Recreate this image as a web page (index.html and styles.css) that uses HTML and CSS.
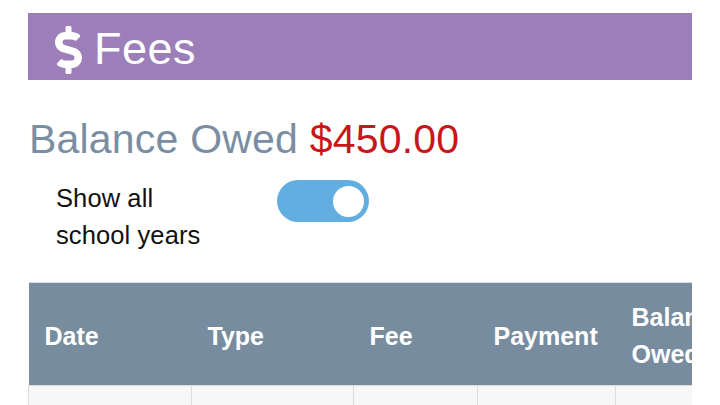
FILE: index.html
```html
<!DOCTYPE html>
<html>
<head>
<meta charset="utf-8">
<link rel="stylesheet" href="styles.css">
</head>
<body>
<div class="page">
  <header class="banner">
    <svg class="dollar" viewBox="0 0 288 512" aria-hidden="true"><path d="M209.2 233.4l-108-31.6C88.7 198.2 80 186.5 80 173.5c0-16.3 13.2-29.5 29.5-29.5h66.3c12.2 0 24.2 3.7 34.2 10.5 6.1 4.1 14.3 3.1 19.5-2l34.8-34c7.1-6.9 6.1-18.4-1.8-24.5C238 74.8 207.4 64.1 176 64V16c0-8.8-7.2-16-16-16h-32c-8.8 0-16 7.2-16 16v48h-2.5C45.8 64-5.4 118.7.5 183.6c4.2 46.1 39.4 83.6 83.8 96.6l102.5 30c12.5 3.700 21.2 15.3 21.2 28.3 0 16.3-13.2 29.5-29.5 29.5h-66.3C100 368 88 364.3 78 357.5c-6.1-4.100-14.3-3.100-19.5 2l-34.8 34c-7.1 6.9-6.1 18.4 1.8 24.5 24.5 19.2 55.1 29.9 86.5 30v48c0 8.8 7.2 16 16 16h32c8.8 0 16-7.2 16-16v-48.2c46.6-.9 90.3-28.6 105.700-72.7 21.5-61.6-14.6-124.8-72.5-141.7z" fill="#fff"/></svg>
    <h1 class="title">Fees</h1>
  </header>

  <h2 class="balance">Balance Owed <span class="amount">$450.00</span></h2>

  <div class="toggle-row">
    <div class="toggle-label">Show all<br>school years</div>
    <div class="switch"><span class="knob"></span></div>
  </div>

  <div class="table-wrap">
    <table class="fees">
      <colgroup>
        <col class="c-date"><col class="c-type"><col class="c-fee"><col class="c-pay"><col class="c-bal">
      </colgroup>
      <thead>
        <tr><th>Date</th><th>Type</th><th>Fee</th><th>Payment</th><th>Balance Owed</th></tr>
      </thead>
      <tbody>
        <tr><td></td><td></td><td></td><td></td><td></td></tr>
      </tbody>
    </table>
  </div>
</div>
</body>
</html>
```
FILE: styles.css
```css
html, body {
  margin: 0;
  padding: 0;
  background: #fff;
}
body {
  font-family: "Liberation Sans", Arial, sans-serif;
  overflow: hidden;
}
.page {
  width: 664px;
  padding: 13px 0 0 28px;
}
.banner {
  height: 67px;
  background: #9c7eb9;
  display: flex;
  align-items: center;
  padding-left: 27px;
  box-sizing: border-box;
  gap: 12px;
}
.dollar {
  width: 27px;
  height: 48px;
  margin-top: 6px;
}
.title {
  margin: 0;
  padding-top: 4px;
  color: #fff;
  font-size: 45px;
  line-height: 1;
  font-weight: normal;
  letter-spacing: 0.5px;
}
.balance {
  margin: 35px 0 0 1px;
  font-size: 41px;
  line-height: 48px;
  font-weight: normal;
  color: #7a8ea3;
  letter-spacing: 0.2px;
}
.amount {
  color: #c8161b;
}
.toggle-row {
  display: flex;
  align-items: flex-start;
  margin-top: 17px;
  padding-left: 28px;
}
.toggle-label {
  width: 221px;
  font-size: 25.5px;
  line-height: 37px;
  color: #111;
  letter-spacing: 0.1px;
}
.switch {
  width: 92px;
  height: 42px;
  border-radius: 21px;
  background: #63aee0;
  display: flex;
  align-items: center;
  justify-content: flex-end;
  padding-right: 5px;
  box-sizing: border-box;
}
.knob {
  width: 31px;
  height: 31px;
  border-radius: 50%;
  background: #fff;
}
.table-wrap {
  margin-top: 28px;
  width: 664px;
  overflow: hidden;
}
.fees {
  border-collapse: collapse;
  table-layout: fixed;
  width: 740px;
}
.c-date { width: 163px; }
.c-type { width: 162px; }
.c-fee { width: 124px; }
.c-pay { width: 138px; }
.c-bal { width: 153px; }
.fees th {
  background: #788ca0;
  color: #fff;
  font-size: 25px;
  line-height: 37px;
  font-weight: bold;
  text-align: left;
  padding: 16px 16px 12px;
  height: 103px;
  box-sizing: border-box;
  vertical-align: middle;
  border-top: 1px solid #dcdcdc;
}
.fees td {
  background: #f7f7f7;
  border: 1px solid #dcdcdc;
  height: 40px;
}
```
